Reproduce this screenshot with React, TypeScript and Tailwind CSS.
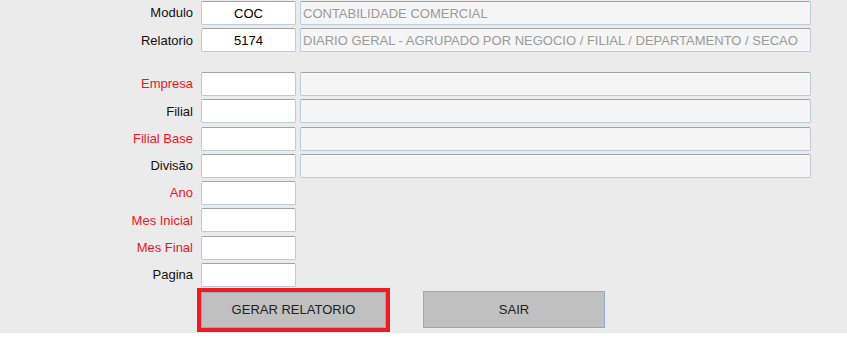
import React from 'react';

// Campos do formulario do relatorio
interface Campo {
  label: string;
  obrigatorio: boolean;
  descricao: boolean;
}

const campos: Campo[] = [
  { label: 'Empresa', obrigatorio: true, descricao: true },
  { label: 'Filial', obrigatorio: false, descricao: true },
  { label: 'Filial Base', obrigatorio: true, descricao: true },
  { label: 'Divisão', obrigatorio: false, descricao: true },
  { label: 'Ano', obrigatorio: true, descricao: false },
  { label: 'Mes Inicial', obrigatorio: true, descricao: false },
  { label: 'Mes Final', obrigatorio: true, descricao: false },
  { label: 'Pagina', obrigatorio: false, descricao: false },
];

const inputBase =
  'h-[24px] border border-[#bccadb] border-t-[#a3a3a3] rounded-[2px] outline-none text-[13px]';

function Linha({
  label,
  red,
  value,
  desc,
  showDesc,
}: {
  label: string;
  red?: boolean;
  value?: string;
  desc?: string;
  showDesc: boolean;
}) {
  return (
    <div className="flex items-center h-[24px]">
      <div className={`w-[193px] text-right text-[13px] ${red ? 'text-[#f0141e]' : 'text-[#111]'}`}>
        {label}
      </div>
      <input
        readOnly
        value={value ?? ''}
        className={`${inputBase} ml-[8px] w-[95px] bg-white text-center text-black`}
      />
      {showDesc && (
        <input
          readOnly
          value={desc ?? ''}
          className={`${inputBase} ml-[4px] w-[511px] bg-[#f5f5f5] px-[2px] text-[#9a9a9a]`}
        />
      )}
    </div>
  );
}

export default function App() {
  return (
    <div className="w-[847px] h-[340px] bg-white" style={{ fontFamily: '"Liberation Sans", Arial, sans-serif' }}>
      <div className="h-[333px] bg-[#ebebeb] pt-[1px]">
        <div className="flex flex-col gap-y-[3.3px]">
          <Linha label="Modulo" value="COC" desc="CONTABILIDADE COMERCIAL" showDesc />
          <Linha
            label="Relatorio"
            value="5174"
            desc="DIARIO GERAL - AGRUPADO POR NEGOCIO / FILIAL / DEPARTAMENTO / SECAO"
            showDesc
          />
        </div>
        <div className="mt-[19.7px] flex flex-col gap-y-[3.3px]">
          {campos.map((c) => (
            <Linha key={c.label} label={c.label} red={c.obrigatorio} showDesc={c.descricao} />
          ))}
        </div>
        <div className="mt-[1px] flex items-start">
          <div className="ml-[197px] border-[4px] border-[#ed1c24]">
            <button className="w-[185px] h-[36px] bg-[#c0c0c0] border border-[#a8a8a8] border-b-[#8faad0] border-r-[#8faad0] text-[13px] text-[#222]">
              GERAR RELATORIO
            </button>
          </div>
          <button className="ml-[33px] mt-[3px] w-[182px] h-[37px] bg-[#c0c0c0] border border-[#a8a8a8] border-b-[#8faad0] border-r-[#8faad0] text-[13px] text-[#222]">
            SAIR
          </button>
        </div>
      </div>
    </div>
  );
}
